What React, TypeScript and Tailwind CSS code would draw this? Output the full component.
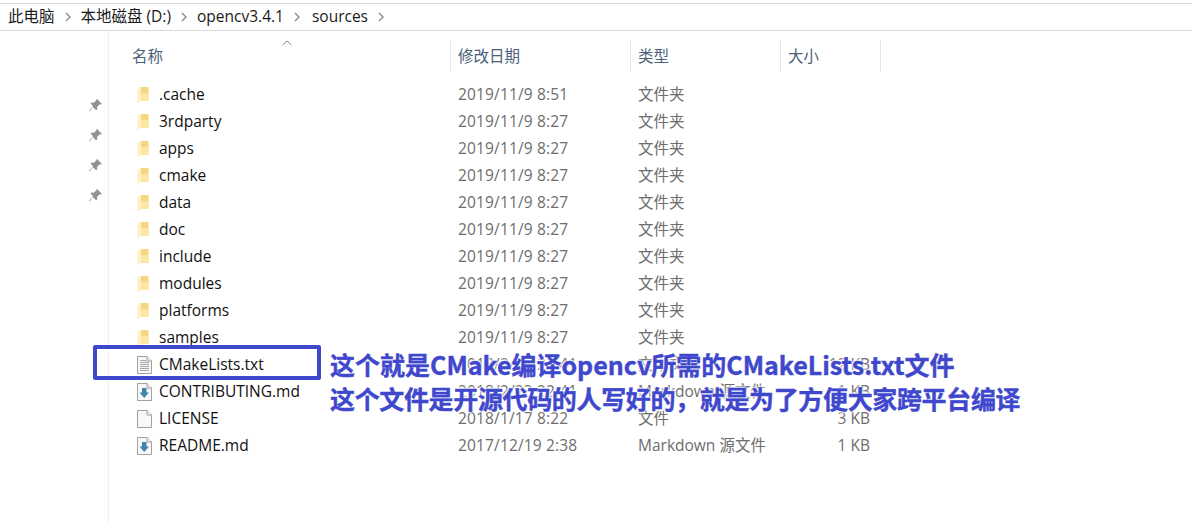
const folders = [
  { name: '.cache', date: '2019/11/9 8:51' },
  { name: '3rdparty', date: '2019/11/9 8:27' },
  { name: 'apps', date: '2019/11/9 8:27' },
  { name: 'cmake', date: '2019/11/9 8:27' },
  { name: 'data', date: '2019/11/9 8:27' },
  { name: 'doc', date: '2019/11/9 8:27' },
  { name: 'include', date: '2019/11/9 8:27' },
  { name: 'modules', date: '2019/11/9 8:27' },
  { name: 'platforms', date: '2019/11/9 8:27' },
  { name: 'samples', date: '2019/11/9 8:27' },
];

const files = [
  { name: 'CMakeLists.txt', date: '2018/2/23 22:41', type: '文本文档', size: '12 KB', icon: 'text' },
  { name: 'CONTRIBUTING.md', date: '2018/2/23 22:41', type: 'Markdown 源文件', size: '1 KB', icon: 'md' },
  { name: 'LICENSE', date: '2018/1/17 8:22', type: '文件', size: '3 KB', icon: 'blank' },
  { name: 'README.md', date: '2017/12/19 2:38', type: 'Markdown 源文件', size: '1 KB', icon: 'md' },
];

function Chevron() {
  return (
    <svg width="6" height="10" viewBox="0 0 6 10" className="mx-[10px] shrink-0">
      <path d="M1 1l4 4-4 4" fill="none" stroke="#8a8a8a" strokeWidth="1.4" />
    </svg>
  );
}

function Pin() {
  return (
    <svg width="15" height="15" viewBox="0 0 14 14">
      <path d="M8.500 1l4.500 4.500-1.200 .6-.8-.3-2.600 2.600.2 2.100-1 1L4.400 8.300 1.500 12.500 1 12l3.700-4.400L2.400 5.200l1-1 2.100.2 2.600-2.600-.3-.8z" fill="#8f9296" />
    </svg>
  );
}

function FolderIcon() {
  return (
    <svg width="12" height="18" viewBox="0 0 12 18">
      <path d="M4 1h7.500v14H4z" fill="#f6d77f" />
      <path d="M4 7h7.500v8H4z" fill="#fce6a4" />
      <path d="M.5 3L4 1v14l-3.500 2.500z" fill="#fff0c4" />
    </svg>
  );
}

function FileIcon({ kind }: { kind: string }) {
  return (
    <svg width="15" height="18" viewBox="0 0 15 18">
      <path d="M.5 .5h9.500l4.500 4.500v12.500H.5z" fill="#f8f8f8" stroke="#a0a0a0" />
      <path d="M10 .5v4.500h4.500" fill="#eeeeee" stroke="#a0a0a0" />
      {kind === 'text' && (
        <path d="M3 4.500h6M3 6.500h9M3 8.500h9M3 10.500h9M3 12.500h9M3 14.500h9" stroke="#a6a6a6" strokeWidth="1" />
      )}
      {kind === 'md' && <path d="M5 5h4.500v4.500H12L7.200 15 2.500 9.500H5z" fill="#3f86a8" />}
    </svg>
  );
}

function Row({ name, date, type, size, icon }: { name: string; date: string; type: string; size?: string; icon: React.ReactNode }) {
  return (
    <div className="flex h-[27px] items-center">
      <div className="flex w-[322px] items-center">
        <div className="flex w-[23px] justify-start pl-[1px]">{icon}</div>
        <span className="text-[#111]">{name}</span>
      </div>
      <div className="w-[180px] tracking-[0.15px] text-[#6d6d6d]">{date}</div>
      <div className="w-[151px] text-[#6d6d6d]">{type}</div>
      <div className="w-[82px] pr-px text-right text-[#6d6d6d]">{size}</div>
    </div>
  );
}

export default function App() {
  return (
    <div className="relative h-[522px] w-[1192px] overflow-hidden bg-white font-['Open_Sans','Noto_Sans_CJK_SC',sans-serif] text-[15.5px]">
      <div className="mt-[3px] flex h-[28px] items-center border-y border-y-[#d9d9d9] pl-[8px] text-[#1a1a1a]">
        <span>此电脑</span>
        <Chevron />
        <span>本地磁盘 (D:)</span>
        <Chevron />
        <span>opencv3.4.1</span>
        <Chevron />
        <span className="ml-[2px]">sources</span>
        <Chevron />
      </div>

      <div className="flex h-[491px]">
        <div className="flex w-[109px] shrink-0 flex-col items-end gap-[15px] border-r border-r-[#eeeeee] pr-[5px] pt-[67px]">
          <Pin />
          <Pin />
          <Pin />
          <Pin />
        </div>
        <div className="pl-[27px]">
          <div className="relative mt-[9px] flex h-[32px] items-center text-[#4c607a]">
            <svg width="10" height="6" viewBox="0 0 10 6" className="absolute left-[146px] top-0">
              <path d="M.5 5L5 1l4.500 4" fill="none" stroke="#8a8a8a" />
            </svg>
            <div className="-ml-[4px] w-[318px] pt-[2px]">名称</div>
            <div className="flex h-full w-[180px] items-center border-l border-l-[#e5e5e5] pl-[7px] pt-[2px]">修改日期</div>
            <div className="flex h-full w-[150px] items-center border-l border-l-[#e5e5e5] pl-[7px] pt-[2px]">类型</div>
            <div className="flex h-full w-[101px] items-center border-x border-x-[#e5e5e5] pl-[7px] pt-[2px]">大小</div>
          </div>
          <div className="mt-[9px]">
            {folders.map((f) => (
              <Row key={f.name} name={f.name} date={f.date} type="文件夹" icon={<FolderIcon />} />
            ))}
            {files.map((f) => (
              <Row key={f.name} name={f.name} date={f.date} type={f.type} size={f.size} icon={<FileIcon kind={f.icon} />} />
            ))}
          </div>
        </div>
      </div>

      <div className="absolute left-[93px] top-[345px] h-[35px] w-[228px] rounded-[2px] border-[4px] border-[#3f48cc]" />
      <div className="absolute left-[330px] top-[347px] font-['Noto_Sans_CJK_SC',sans-serif] text-[25px] leading-[34px] font-bold whitespace-nowrap text-[#3f48cc] [-webkit-text-stroke:0.4px_#3f48cc] [text-shadow:0_0_3px_#fff,0_0_3px_#fff,0_0_3px_#fff,0_0_3px_#fff]">
        <div>这个就是CMake编译opencv所需的CMakeLists.txt文件</div>
        <div className="tracking-[-0.35px]">这个文件是开源代码的人写好的，就是为了方便大家跨平台编译</div>
      </div>
    </div>
  );
}
